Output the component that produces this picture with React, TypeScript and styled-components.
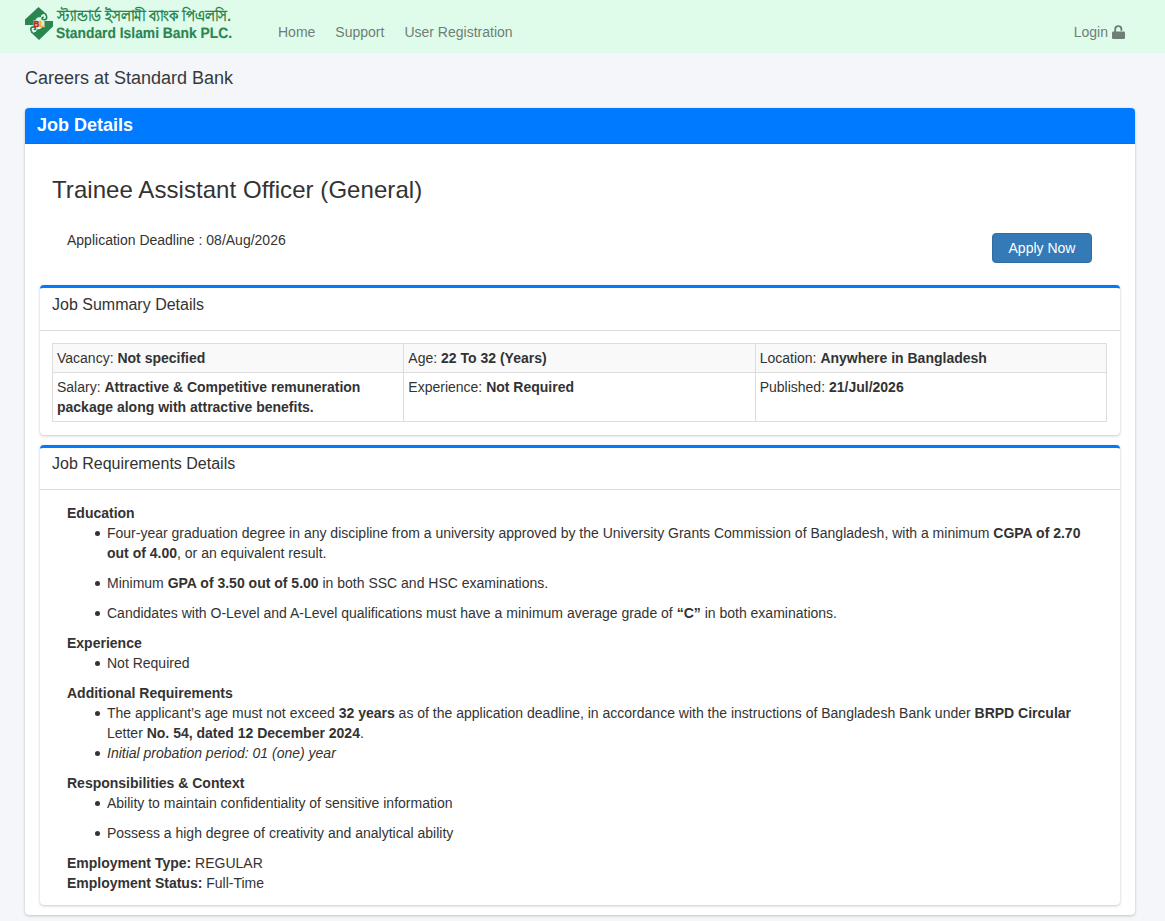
import React from 'react';
import styled, { createGlobalStyle } from 'styled-components';

const GlobalStyle = createGlobalStyle`
  *, *::before, *::after { box-sizing: border-box; }
  html, body { margin: 0; height: 100%; overflow: hidden; }
  body {
    background: #f4f6f9;
    color: #333;
    font: 14px/20px "Liberation Sans", Arial, "Noto Sans", sans-serif;
  }
  h1, h2, h3, p, ul { margin: 0; font-weight: 400; }
`;

const Navbar = styled.nav`
  display: flex;
  align-items: center;
  height: 53px;
  padding: 11px 40px 0 24px;
  background: #dffceb;
`;

const Brand = styled.a`
  display: block;
  height: 53px;
  width: 210px;
  margin: -11px 34px 0 0;
`;

const NavLink = styled.a<{ $end?: boolean }>`
  display: flex;
  align-items: center;
  gap: 4px;
  padding: 0 10px;
  color: #6f7e76;
  ${({ $end }) => $end && 'margin-left: auto; padding-right: 0;'}
`;

const Main = styled.main`
  padding: 0 30px 0 25px;
`;

const PageTitle = styled.h1`
  padding: 14px 0 18px;
  font-size: 18px;
  line-height: 23px;
  color: #343a40;
`;

const Card = styled.section`
  height: 807px;
  background: #fff;
  border-radius: 4px;
  box-shadow: 0 0 1px rgba(0, 0, 0, 0.125), 0 1px 3px rgba(0, 0, 0, 0.2);
`;

const CardHeader = styled.header`
  height: 36px;
  padding: 7px 12px;
  background: #007bff;
  border-bottom: 1px solid #0072ec;
  border-radius: 4px 4px 0 0;
  color: #fff;
  font-size: 18px;
  font-weight: 700;
`;

const CardBody = styled.div`
  padding: 31px 15px 0;
`;

const JobTitle = styled.h2`
  padding-left: 12px;
  font-size: 24px;
  line-height: 30px;
  letter-spacing: 0.06px;
`;

const DeadlineRow = styled.div`
  display: flex;
  justify-content: space-between;
  align-items: flex-start;
  height: 80px;
  padding: 25px 28px 0 27px;
`;

const ApplyButton = styled.button`
  width: 100px;
  height: 30px;
  margin-top: 3px;
  padding: 0;
  border: 1px solid #2e6da4;
  border-radius: 4px;
  background: #337ab7;
  color: #fff;
  font: inherit;
`;

const Panel = styled.section<{ $height: number }>`
  height: ${({ $height }) => $height}px;
  margin-bottom: 10px;
  border-top: 3px solid #007bff;
  border-radius: 4px;
  background: #fff;
  box-shadow: 0 0 1px rgba(0, 0, 0, 0.125), 0 1px 3px rgba(0, 0, 0, 0.2);
`;

const PanelTitle = styled.h3<{ $compact?: boolean }>`
  height: ${({ $compact }) => ($compact ? 42 : 43)}px;
  padding: ${({ $compact }) => ($compact ? 6 : 7)}px 12px 0;
  border-bottom: 1px solid #dcdcdc;
  font-size: 16px;
`;

const SummaryTable = styled.table`
  width: 1055px;
  margin: 12px 12px 0;
  table-layout: fixed;
  border-collapse: collapse;

  td {
    padding: 4px;
    border: 1px solid #ddd;
    vertical-align: top;
  }
  tr:first-child td { background: #f9f9f9; }
`;

const Requirements = styled.div`
  padding: 13px 27px;
`;

const List = styled.ul<{ $spaced?: boolean }>`
  padding-left: 40px;
  margin-bottom: 10px;
  list-style: none;

  li::before {
    content: '';
    display: inline-block;
    width: 5px;
    height: 5px;
    margin: 0 7px 2px -12px;
    border-radius: 50%;
    background: #333;
  }
  li + li { margin-top: ${({ $spaced }) => ($spaced ? 10 : 0)}px; }
`;

const Logo = () => (
  <svg width="210" height="53" viewBox="0 0 210 53" role="img" aria-label="Standard Islami Bank">
    <g fill="#2b8550">
      <path d="M1 25V19.5L14.5 7L23 14.5C19.5 13.5 16.5 14.5 17 17L13.5 17.5C11.5 19.5 12 20.5 9.5 20.5V25Z" />
      <path d="M29 21V26.5L15 40L6.5 32C10 33 13 32 12.5 29.5L16 29C18.5 27.5 17.5 26.5 20 26.5V21Z" />
    </g>
    <g fill="none" stroke="#2b8550" strokeWidth="1.7" strokeLinecap="round">
      <path d="M21.5 14.2C24 17.5 22.5 20 19.7 19.8C17.5 19.6 17.5 17.4 19.2 17.3" />
      <path d="M8 32.3C5.5 29 7 26.7 9.8 27C12 27.2 12 29.4 10.3 29.5" />
    </g>
    <rect x="9.5" y="20.5" width="11" height="6.5" fill="#dcebcf" />
    <text x="9.3" y="26.8" fontSize="8.5" fontWeight="700" fill="#b32d27" stroke="#b32d27" strokeWidth="0.4">B</text>
    <text x="15.3" y="26.8" fontSize="8.5" fontWeight="700" fill="#ebb529" stroke="#ebb529" strokeWidth="0.6">L</text>
    <text x="33" y="21" fontSize="15" fontWeight="700" fill="#2b8550" textLength="174" lengthAdjust="spacingAndGlyphs">
      স্ট্যান্ডার্ড ইসলামী ব্যাংক পিএলসি.
    </text>
    <text x="32" y="37.5" fontSize="15" fontWeight="700" fill="#2b8550" stroke="#2b8550" strokeWidth="0.15" textRendering="geometricPrecision" textLength="176" lengthAdjust="spacingAndGlyphs">
      Standard Islami Bank PLC.
    </text>
  </svg>
);

const UnlockIcon = () => (
  <svg width="13" height="15" viewBox="0 0 13 15" aria-hidden="true">
    <path d="M3.2 7V4.2a3.1 3.1 0 0 1 6.2 0V5" fill="none" stroke="#6f7e76" strokeWidth="1.9" strokeLinecap="round" />
    <rect y="6.6" width="13" height="7.4" rx="1.3" fill="#6f7e76" />
  </svg>
);

export default function App() {
  return (
    <>
      <GlobalStyle />
      <Navbar>
        <Brand><Logo /></Brand>
        <NavLink>Home</NavLink>
        <NavLink>Support</NavLink>
        <NavLink>User Registration</NavLink>
        <NavLink $end>Login <UnlockIcon /></NavLink>
      </Navbar>
      <Main>
        <PageTitle>Careers at Standard Bank</PageTitle>
        <Card>
          <CardHeader>Job Details</CardHeader>
          <CardBody>
            <JobTitle>Trainee Assistant Officer (General)</JobTitle>
            <DeadlineRow>
              <span>Application Deadline : 08/Aug/2026</span>
              <ApplyButton>Apply Now</ApplyButton>
            </DeadlineRow>
            <Panel $height={150}>
              <PanelTitle>Job Summary Details</PanelTitle>
              <SummaryTable>
                <tbody>
                  <tr>
                    <td>Vacancy: <b>Not specified</b></td>
                    <td>Age: <b>22 To 32 (Years)</b></td>
                    <td>Location: <b>Anywhere in Bangladesh</b></td>
                  </tr>
                  <tr>
                    <td>Salary: <b>Attractive &amp; Competitive remuneration package along with attractive benefits.</b></td>
                    <td>Experience: <b>Not Required</b></td>
                    <td>Published: <b>21/Jul/2026</b></td>
                  </tr>
                </tbody>
              </SummaryTable>
            </Panel>
            <Panel $height={460}>
              <PanelTitle $compact>Job Requirements Details</PanelTitle>
              <Requirements>
                <b>Education</b>
                <List $spaced>
                  <li>
                    Four-year graduation degree in any discipline from a university approved by the University Grants
                    Commission of Bangladesh, with a minimum <b>CGPA of 2.70 out of 4.00</b>, or an equivalent result.
                  </li>
                  <li>Minimum <b>GPA of 3.50 out of 5.00</b> in both SSC and HSC examinations.</li>
                  <li>
                    Candidates with O-Level and A-Level qualifications must have a minimum average grade of <b>“C”</b> in
                    both examinations.
                  </li>
                </List>
                <b>Experience</b>
                <List>
                  <li>Not Required</li>
                </List>
                <b>Additional Requirements</b>
                <List>
                  <li>
                    The applicant’s age must not exceed <b>32 years</b> as of the application deadline, in accordance with
                    the instructions of Bangladesh Bank under <b>BRPD Circular</b> Letter{' '}
                    <b>No. 54, dated 12 December 2024</b>.
                  </li>
                  <li><i>Initial probation period: 01 (one) year</i></li>
                </List>
                <b>Responsibilities &amp; Context</b>
                <List $spaced>
                  <li>Ability to maintain confidentiality of sensitive information</li>
                  <li>Possess a high degree of creativity and analytical ability</li>
                </List>
                <p><b>Employment Type:</b> REGULAR</p>
                <p><b>Employment Status:</b> Full-Time</p>
              </Requirements>
            </Panel>
          </CardBody>
        </Card>
      </Main>
    </>
  );
}
